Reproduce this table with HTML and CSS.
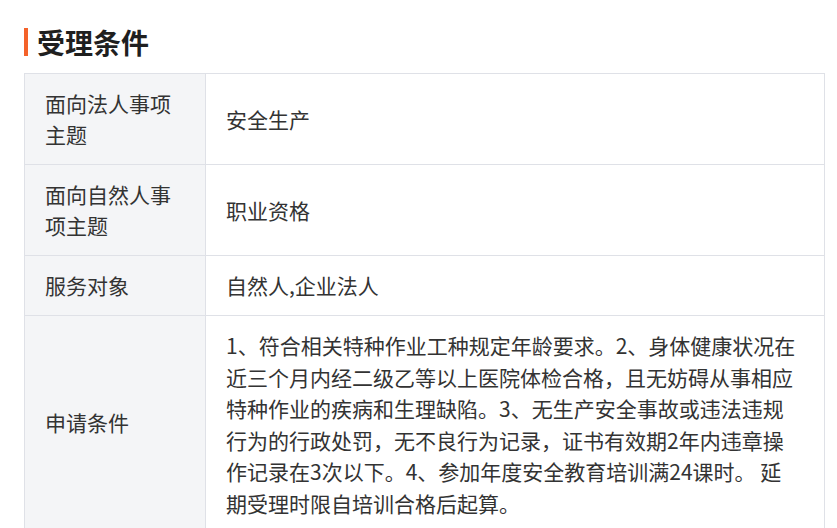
FILE: index.html
```html
<!DOCTYPE html>
<html lang="zh-CN">
<head>
<meta charset="utf-8">
<title>受理条件</title>
<link rel="stylesheet" href="styles.css">
</head>
<body>
<section class="block">
  <h2 class="block-title">受理条件</h2>
  <table class="info-table">
    <tbody>
      <tr>
        <th class="label">面向法人事项主题</th>
        <td class="value">安全生产</td>
      </tr>
      <tr>
        <th class="label">面向自然人事项主题</th>
        <td class="value">职业资格</td>
      </tr>
      <tr>
        <th class="label">服务对象</th>
        <td class="value">自然人,企业法人</td>
      </tr>
      <tr>
        <th class="label">申请条件</th>
        <td class="value value-long">1、符合相关特种作业工种规定年龄要求。2、身体健康状况在近三个月内经二级乙等以上医院体检合格，且无妨碍从事相应特种作业的疾病和生理缺陷。3、无生产安全事故或违法违规行为的行政处罚，无不良行为记录，证书有效期2年内违章操作记录在3次以下。4、参加年度安全教育培训满24课时。 延期受理时限自培训合格后起算。</td>
      </tr>
    </tbody>
  </table>
</section>
</body>
</html>
```

FILE: styles.css
```css
html, body {
  margin: 0;
  padding: 0;
  background: #ffffff;
}

body {
  font-family: "Noto Sans CJK SC", "Noto Sans", sans-serif;
  color: #333333;
}

.block {
  padding: 28px 0 0 24px;
}

.block-title {
  display: flex;
  align-items: center;
  margin: 0 0 17px 0;
  height: 28px;
  font-size: 28px;
  line-height: 28px;
  font-weight: 700;
  color: #1f1f1f;
}

.block-title::before {
  content: "";
  display: block;
  width: 4px;
  height: 28px;
  margin-right: 9px;
  background: #f4622a;
}

.info-table {
  border-collapse: collapse;
  table-layout: fixed;
  width: 801px;
  font-size: 21px;
  line-height: 31px;
}

.info-table th,
.info-table td {
  border: 1px solid #dfe1e7;
  vertical-align: middle;
  text-align: left;
  font-weight: 400;
}

.label {
  width: 140px;
  padding: 14px 20px 14px 20px;
  background: #f4f5f7;
  color: #333333;
}

.value {
  padding: 14px 25px 14px 20px;
  color: #333333;
  word-break: break-all;
}

.value-long {
  line-height: 31.5px;
  padding-bottom: 9px;
}
```
